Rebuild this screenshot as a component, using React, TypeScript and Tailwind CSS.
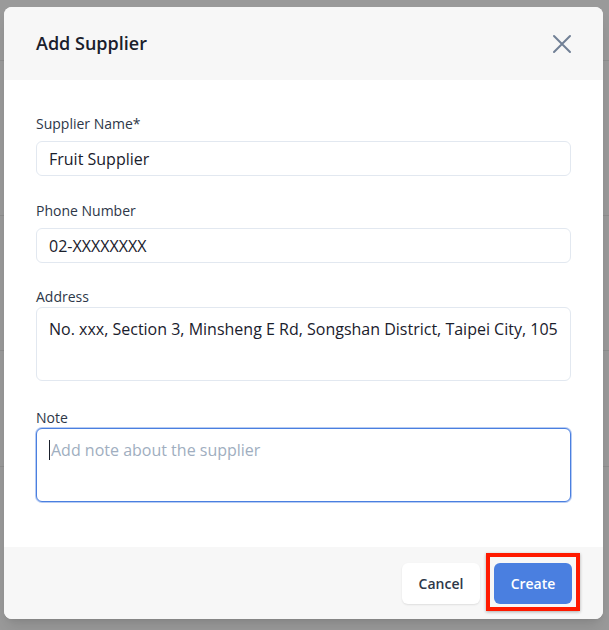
function CloseIcon() {
  return (
    <svg width="20" height="20" viewBox="0 0 20 20" fill="none" aria-hidden="true">
      <path d="M2 2L18 18M18 2L2 18" stroke="#718096" strokeWidth="2" strokeLinecap="round" />
    </svg>
  );
}

const font = { fontFamily: '"Open Sans", "Liberation Sans", sans-serif' };

function Field({
  label,
  value,
  placeholder,
  multiline,
  focused,
  className,
}: {
  label: string;
  value?: string;
  placeholder?: string;
  multiline?: boolean;
  focused?: boolean;
  className?: string;
}) {
  const border = focused
    ? "border-[#4a7fe0] ring-1 ring-[#4a7fe0]/40"
    : "border-[#e2e8f0]";
  return (
    <div className={`flex flex-col ${className ?? ""}`}>
      <label className={`text-[14px] leading-5 text-[#2d3748] ${multiline ? "" : "mb-[7px]"}`}>
        {label}
      </label>
      {multiline ? (
        <div
          className={`h-[74px] rounded-md border bg-white px-[12px] pt-[9px] text-[16px] leading-6 ${border}`}
        >
          {value ? (
            <span className="text-[#1a202c]">{value}</span>
          ) : (
            <span className="flex items-center">
              <span className="w-px h-[20px] bg-[#1a202c] mr-px" />
              <span className="text-[#a0aec0]">{placeholder}</span>
            </span>
          )}
        </div>
      ) : (
        <div
          className={`h-[35px] rounded-md border bg-white px-[12px] flex items-center text-[16px] text-[#1a202c] ${border}`}
        >
          {value}
        </div>
      )}
    </div>
  );
}

export default function App() {
  return (
    <div className="w-[609px] h-[630px] bg-[#9a9a9a] overflow-hidden relative" style={font}>
      {/* faint page lines behind the overlay */}
      <div className="absolute inset-x-0 top-[60px] h-px bg-[#8e8e8e]" />
      <div className="absolute inset-x-0 top-[215px] h-px bg-[#8e8e8e]" />
      <div className="absolute inset-x-0 top-[350px] h-px bg-[#8e8e8e]" />
      <div className="absolute inset-x-0 top-[466px] h-px bg-[#8e8e8e]" />

      <div className="relative ml-[4px] mt-[7px] w-[599px] h-[612px] rounded-lg bg-white overflow-hidden flex flex-col shadow-lg">
        <div className="h-[73px] bg-[#f7f7f7] flex items-center justify-between pl-[32px] pr-[31px]">
          <h2 className="text-[18px] font-semibold text-[#1a202c]">Add Supplier</h2>
          <CloseIcon />
        </div>

        <div className="flex-1 px-[32px] pt-[34px]">
          <Field label="Supplier Name*" value="Fruit Supplier" />
          <Field label="Phone Number" value="02-XXXXXXXX" className="mt-[25px]" />
          <Field
            label="Address"
            value="No. xxx, Section 3, Minsheng E Rd, Songshan District, Taipei City, 105"
            multiline
            className="mt-[24px]"
          />
          <Field
            label="Note"
            placeholder="Add note about the supplier"
            multiline
            focused
            className="mt-[27px]"
          />
        </div>

        <div className="h-[72px] bg-[#f7f7f7] flex items-center justify-end gap-[14px] pr-[31px]">
          <button
            type="button"
            className="w-[78px] h-[41px] rounded-md bg-white text-[14px] font-semibold text-[#2d3748] shadow-[0_1px_2px_rgba(0,0,0,0.1)]"
          >
            Cancel
          </button>
          <div className="relative">
            <button
              type="button"
              className="w-[78px] h-[41px] rounded-md bg-[#4a7fe0] text-[14px] font-semibold text-white"
            >
              Create
            </button>
            <div className="absolute -left-[8px] -top-[10px] -right-[8px] -bottom-[7px] border-4 border-[#ff1a00] shadow-[0_1px_3px_rgba(0,0,0,0.3)]" />
          </div>
        </div>
      </div>
    </div>
  );
}
